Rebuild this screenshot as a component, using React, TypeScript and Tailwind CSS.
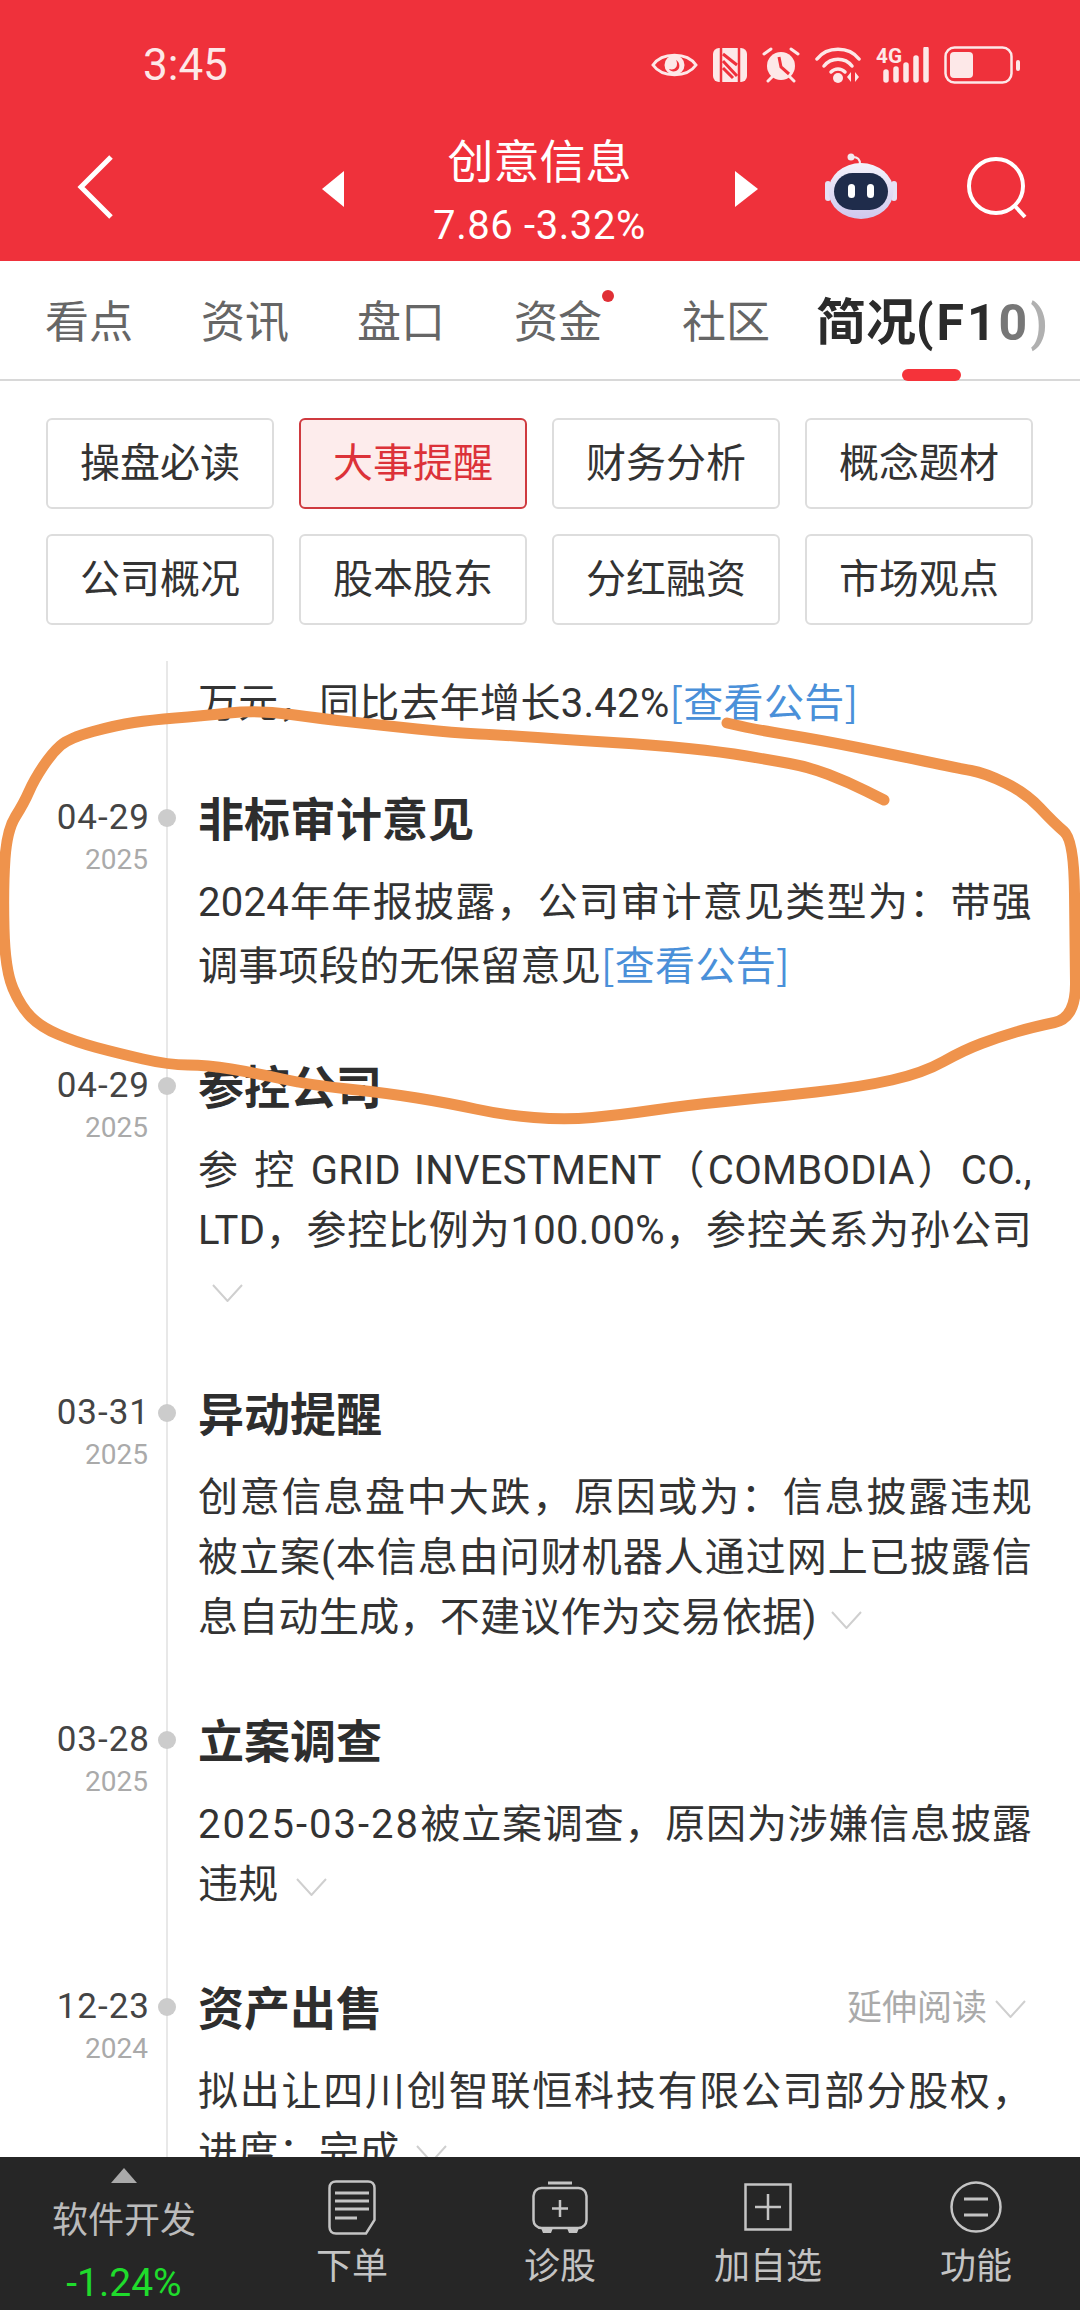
import type { ReactNode } from "react";

const tabs = [
  { label: "看点", className: "ml-[45px]" },
  { label: "资讯", className: "ml-[68px]" },
  { label: "盘口", className: "ml-[68px]" },
  { label: "资金", className: "ml-[69px]", dot: true },
  { label: "社区", className: "ml-[80px]" },
];

const chips = ["操盘必读", "大事提醒", "财务分析", "概念题材", "公司概况", "股本股东", "分红融资", "市场观点"];

const Link = () => <span className="text-[#4a90d9] [font-family:'Noto_Sans_CJK_SC',sans-serif]">[查看公告]</span>;

const Chevron = ({ className }: { className: string }) => (
  <svg viewBox="0 0 31 18" className={`inline-block h-[18px] w-[31px] ${className}`} fill="none" stroke="#cfcfcf" strokeWidth="2">
    <path d="M1 1 L15.5 17 L30 1" />
  </svg>
);

type Item = {
  date: string;
  year: string;
  title: string;
  row: string;
  body?: string;
  more?: boolean;
  content: ReactNode;
};

const items: Item[] = [
  {
    date: "04-29",
    year: "2025",
    title: "非标审计意见",
    row: "pb-[59px]",
    content: (
      <>
        2024年年报披露，公司审计意见类型为：带强调事项段的无保留意见
        <Link />
      </>
    ),
  },
  {
    date: "04-29",
    year: "2025",
    title: "参控公司",
    row: "pb-[62px]",
    body: "[text-justify:inter-word]",
    content: (
      <>
        参 控 GRID INVESTMENT（COMBODIA）CO., LTD，参控比例为100.00%，参控关系为孙公司
        <Chevron className="ml-[14px]" />
      </>
    ),
  },
  {
    date: "03-31",
    year: "2025",
    title: "异动提醒",
    row: "pb-[62px]",
    content: (
      <>
        创意信息盘中大跌，原因或为：信息披露违规被立案(本信息由问财机器人通过网上已披露信息自动生成，不建议作为交易依据)
        <Chevron className="ml-[14px]" />
      </>
    ),
  },
  {
    date: "03-28",
    year: "2025",
    title: "立案调查",
    row: "pb-[62px]",
    content: (
      <>
        <span className="tracking-[2px]">2025-03-28</span>被立案调查，原因为涉嫌信息披露违规
        <Chevron className="ml-[17px]" />
      </>
    ),
  },
  {
    date: "12-23",
    year: "2024",
    title: "资产出售",
    row: "pb-[40px]",
    more: true,
    content: (
      <>
        拟出让四川创智联恒科技有限公司部分股权，进度：完成
        <Chevron className="ml-[16px]" />
      </>
    ),
  },
];

const StatusIcons = () => (
  <div className="ml-auto flex items-center pr-[60px] text-[#fde8e8]">
    <svg viewBox="0 0 47 32" className="h-[32px] w-[47px]">
      <path d="M2 16 C11 3 36 3 45 16 C36 29 11 29 2 16Z" fill="none" stroke="currentColor" strokeWidth="3" />
      <circle cx="23.5" cy="16" r="10" fill="currentColor" />
      <path d="M18 20 C24 22 28 17 25 11 C29 13 30 20 25 22 C22 23 19 22 18 20Z" fill="#ef313b" />
    </svg>
    <svg viewBox="0 0 34 34" className="ml-[15px] h-[34px] w-[34px]">
      <rect width="34" height="34" rx="6" fill="currentColor" />
      <path d="M8 0V34M26 0V34" stroke="#ef313b" strokeWidth="2.5" />
      <path d="M10 6 L24 17 M10 13 L24 28 M10 20 L20 30" stroke="#ef313b" strokeWidth="3" fill="none" />
    </svg>
    <svg viewBox="0 0 38 36" className="ml-[15px] h-[36px] w-[38px]">
      <circle cx="19" cy="19" r="14" fill="currentColor" />
      <path d="M17 10 L19 20 L27 27" stroke="#ef313b" strokeWidth="3" fill="none" />
      <path d="M2 7 L9 2 M36 7 L29 2 M6 34 L10 30 M32 34 L28 30" stroke="currentColor" strokeWidth="3" strokeLinecap="round" fill="none" />
    </svg>
    <svg viewBox="0 0 46 36" className="ml-[15px] h-[36px] w-[46px]">
      <g fill="none" stroke="currentColor" strokeWidth="3.5" strokeLinecap="round">
        <path d="M2 12 C12 -1 34 -1 44 12" />
        <path d="M9 19 C16 10 30 10 37 19" />
        <path d="M16 25 C20 21 26 21 30 25" />
      </g>
      <circle cx="23" cy="31" r="5" fill="currentColor" />
      <path d="M36 25 L32 30 L36 35Z M40 25 L44 30 L40 35Z" fill="currentColor" />
    </svg>
    <svg viewBox="0 0 53 36" className="ml-[15px] h-[36px] w-[53px]">
      <text x="0" y="16" fontSize="20" fontWeight="700" textLength="26" lengthAdjust="spacingAndGlyphs" fill="currentColor" fontFamily="Roboto, sans-serif">
        4G
      </text>
      <g stroke="currentColor" strokeWidth="5.5" strokeLinecap="round">
        <path d="M10 25V33M20 22V33M30 18V33M40 11V33M50 2V33" />
      </g>
    </svg>
    <svg viewBox="0 0 76 38" className="ml-[15px] h-[38px] w-[76px]">
      <rect x="1.5" y="1.5" width="66" height="35" rx="9" fill="none" stroke="currentColor" strokeWidth="2.5" />
      <rect x="6" y="6" width="23" height="26" rx="4" fill="currentColor" />
      <rect x="72" y="14" width="4" height="11" rx="2" fill="currentColor" />
    </svg>
  </div>
);

const Robot = () => (
  <svg viewBox="0 0 72 66" className="-mt-[6px] ml-[67px] h-[66px] w-[72px]">
    <defs>
      <linearGradient id="helmet" x1="0" y1="0" x2="0" y2="1">
        <stop offset="0" stopColor="#f4f3fb" />
        <stop offset="1" stopColor="#cfc8ee" />
      </linearGradient>
    </defs>
    <circle cx="26" cy="4" r="3.5" fill="#f3e9ee" />
    <path d="M28 4 C33 4 35 7 35 11" stroke="#f3e9ee" strokeWidth="2" fill="none" />
    <rect x="0" y="28" width="6" height="20" rx="3" fill="#e6e2f4" />
    <rect x="66" y="28" width="6" height="20" rx="3" fill="#e6e2f4" />
    <ellipse cx="36" cy="38" rx="32.5" ry="28" fill="url(#helmet)" />
    <rect x="9" y="20" width="54" height="37" rx="18.5" fill="#1f2c4b" />
    <rect x="23" y="31" width="7" height="14" rx="3.5" fill="#ffffff" />
    <rect x="42" y="31" width="7" height="14" rx="3.5" fill="#ffffff" />
  </svg>
);

const NavBar = () => (
  <div className="mt-[39px] flex h-[90px] items-center pl-[77px]">
    <svg viewBox="0 0 36 64" className="-mt-[5px] h-[64px] w-[36px]" fill="none" stroke="#ffffff" strokeWidth="5">
      <path d="M34 2 L4 32 L34 62" />
    </svg>
    <svg viewBox="0 0 22 36" className="ml-[209px] h-[36px] w-[22px]" fill="#ffffff">
      <path d="M22 0V36L0 18Z" />
    </svg>
    <div className="flex h-[90px] w-[391px] flex-col items-center text-white">
      <div className="-mt-[10px] text-[46px] leading-[56px]">创意信息</div>
      <div className="mt-[13px] text-[40px] leading-[46px] tracking-[0.6px]">7.86 -3.32%</div>
    </div>
    <svg viewBox="0 0 23 36" className="h-[36px] w-[23px]" fill="#ffffff">
      <path d="M0 0V36L23 18Z" />
    </svg>
    <Robot />
    <svg viewBox="0 0 60 62" className="-mt-[2px] ml-[70px] h-[62px] w-[60px]" fill="none" stroke="#ffffff" strokeWidth="4">
      <circle cx="29" cy="29" r="27" />
      <path d="M47 48 L58 60" />
    </svg>
  </div>
);

const TabBar = () => (
  <div className="relative flex h-[120px] shrink-0 items-center border-b-2 border-[#d8d8d8] pt-[5px] text-[44px] text-[#666666]">
    {tabs.map((tab) => (
      <div key={tab.label} className={`relative leading-[60px] ${tab.className}`}>
        {tab.label}
        {tab.dot && <span className="absolute -right-[12px] top-[-3px] h-[12px] w-[12px] rounded-full bg-[#e02f35]" />}
      </div>
    ))}
    <div className="ml-[46px] whitespace-nowrap text-[50px] font-bold leading-[60px] text-[#2b2b2b]">
      简况
      <span className="tracking-[3px]">
        (F1<span className="text-[#777777]">0</span>
        <span className="text-[#b0b0b0]">)</span>
      </span>
    </div>
    <span className="absolute bottom-[-2px] left-[902px] h-[12px] w-[59px] rounded-full bg-[#f5333a]" />
  </div>
);

const ChipGrid = () => (
  <div className="grid shrink-0 grid-cols-[repeat(4,228px)] gap-x-[25px] gap-y-[25px] pb-[36px] pl-[46px] pt-[37px]">
    {chips.map((chip) => (
      <div
        key={chip}
        className={`flex h-[91px] items-center justify-center rounded-[6px] border-2 text-[40px] ${
          chip === "大事提醒"
            ? "border-[#cf3a3f] bg-[#fdecec] text-[#dc3239]"
            : "border-[#dddddd] bg-white text-[#333333]"
        }`}
      >
        {chip}
      </div>
    ))}
  </div>
);

const TimelineRow = ({ item }: { item: Item }) => (
  <div className="flex">
    <div className="relative w-[168px] shrink-0 border-r-2 border-[#e8e8e8] text-right">
      <div className="pr-[16px] text-[35px] leading-[60px] tracking-[1px] text-[#444444]">{item.date}</div>
      <div className="mt-px pr-[18px] text-[28px] leading-[22px] text-[#aaaaaa]">{item.year}</div>
      <span className="absolute right-[-10px] top-[21px] h-[18px] w-[18px] rounded-full bg-[#cccccc]" />
    </div>
    <div className={`w-[864px] pl-[30px] ${item.row}`}>
      <div className="flex h-[60px] items-center justify-between pt-[4px]">
        <div className="text-[46px] font-bold leading-[60px] text-[#2e2e2e]">{item.title}</div>
        {item.more && (
          <div className="flex items-center pr-[6px] text-[35px] text-[#aaaaaa]">
            延伸阅读
            <Chevron className="ml-[8px]" />
          </div>
        )}
      </div>
      <p className={`mt-[25px] text-justify text-[40px] leading-[60px] tracking-[0.3px] text-[#333333] ${item.body ?? ""}`}>
        {item.content}
      </p>
    </div>
  </div>
);

const Timeline = () => (
  <div className="min-h-0 flex-1 overflow-hidden">
    <div className="flex">
      <div className="w-[168px] shrink-0 border-r-2 border-[#e8e8e8]" />
      <div className="pb-[54px] pl-[30px] pt-[9px] text-[40px] leading-[60px] tracking-[0.3px] text-[#333333]">
        万元，同比去年增长3.42%
        <Link />
      </div>
    </div>
    {items.map((item) => (
      <TimelineRow key={item.title} item={item} />
    ))}
  </div>
);

const ToolbarButton = ({ label, icon }: { label: string; icon: ReactNode }) => (
  <div className="flex w-[208px] flex-col items-center pt-[22px]">
    <div className="flex h-[56px] items-center justify-center">{icon}</div>
    <div className="mt-[12px] text-[36px] leading-[40px] text-[#c4c4c4]">{label}</div>
  </div>
);

const Toolbar = () => (
  <div className="flex h-[153px] shrink-0 bg-[#262626]">
    <div className="flex w-[248px] flex-col items-center pt-[11px]">
      <svg viewBox="0 0 26 15" className="h-[15px] w-[26px]" fill="#aaaaaa">
        <path d="M13 0L26 15H0Z" />
      </svg>
      <div className="mt-[16px] text-[36px] leading-[44px] text-[#bbbbbb]">软件开发</div>
      <div className="mt-[18px] text-[39px] leading-[44px] text-[#1fdc2c]">-1.24%</div>
    </div>
    <ToolbarButton
      label="下单"
      icon={
        <svg viewBox="0 0 48 55" className="h-[55px] w-[48px]" fill="none" stroke="#c4c4c4" strokeWidth="2.5">
          <path d="M8 1.5H40C44 1.5 46.5 4 46.5 8V40L38 53.5H8C4 53.5 1.5 51 1.5 47V8C1.5 4 4 1.5 8 1.5Z" />
          <path d="M7 13H41M7 21H41M7 29H41M7 38H29" strokeWidth="3" />
        </svg>
      }
    />
    <ToolbarButton
      label="诊股"
      icon={
        <svg viewBox="0 0 56 52" className="h-[52px] w-[56px]" fill="none" stroke="#c4c4c4" strokeWidth="2.5">
          <path d="M16 2H40" strokeWidth="3" />
          <rect x="1.5" y="7" width="53" height="40" rx="8" />
          <path d="M28 19V36M20 27.5H36" />
          <path d="M9 47H21L19 52H11ZM35 47H47L45 52H37Z" fill="#c4c4c4" stroke="none" />
        </svg>
      }
    />
    <ToolbarButton
      label="加自选"
      icon={
        <svg viewBox="0 0 48 48" className="h-[48px] w-[48px]" fill="none" stroke="#c4c4c4" strokeWidth="2.5">
          <rect x="1.5" y="1.5" width="45" height="45" />
          <path d="M24 11V37M11 24H37" />
        </svg>
      }
    />
    <ToolbarButton
      label="功能"
      icon={
        <svg viewBox="0 0 52 52" className="h-[52px] w-[52px]" fill="none" stroke="#c4c4c4" strokeWidth="2.5">
          <circle cx="26" cy="26" r="24.5" />
          <path d="M14 18H38M14 34H38" strokeWidth="3" />
        </svg>
      }
    />
  </div>
);

// hand-drawn marker ring on top of the screenshot
const ringPoints = [
  [884, 800], [848, 782], [809, 767], [770, 760], [723, 752], [654, 745], [572, 740], [503, 735], [455, 733], [379, 725],
  [324, 719], [258, 710], [200, 716], [151, 720], [117, 725], [69, 738], [52, 753], [34, 780], [24, 803], [7, 830],
  [3, 887], [5, 970], [21, 1007], [41, 1027], [76, 1042], [117, 1053], [169, 1065], [207, 1065], [255, 1073], [310, 1085],
  [386, 1093], [448, 1103], [503, 1115], [565, 1120], [620, 1115], [689, 1105], [771, 1097], [861, 1087], [923, 1073],
  [964, 1050], [999, 1037], [1033, 1027], [1076, 1018], [1075, 947], [1074, 840], [1054, 823], [1026, 793], [985, 773],
  [957, 768], [895, 755], [820, 740], [758, 730], [727, 723],
];

const ringPath = ringPoints
  .map(([x, y], i) => {
    if (i === 0) return `M${x} ${y}`;
    const [px, py] = ringPoints[i - 1];
    return `Q${px} ${py} ${(px + x) / 2} ${(py + y) / 2}`;
  })
  .join(" ");

const MarkerRing = () => (
  <svg viewBox="0 0 1080 2310" className="pointer-events-none absolute left-0 top-0 h-[2310px] w-[1080px]" fill="none">
    <path d={`${ringPath} L727 723`} stroke="#ef934c" strokeWidth="11" strokeLinecap="round" strokeLinejoin="round" />
  </svg>
);

export default function App() {
  return (
    <div className="relative flex h-[2310px] w-[1080px] flex-col overflow-hidden bg-white [font-family:Roboto,'Noto_Sans_CJK_SC',sans-serif]">
      <header className="h-[261px] shrink-0 bg-[#ef313b]">
        <div className="flex h-[40px] translate-y-[45px] items-center pl-[143px] text-[44px] text-[#fde8e8]">
          <span>3:45</span>
          <StatusIcons />
        </div>
        <div className="pt-[65px]">
          <NavBar />
        </div>
      </header>
      <TabBar />
      <ChipGrid />
      <Timeline />
      <Toolbar />
      <MarkerRing />
    </div>
  );
}
